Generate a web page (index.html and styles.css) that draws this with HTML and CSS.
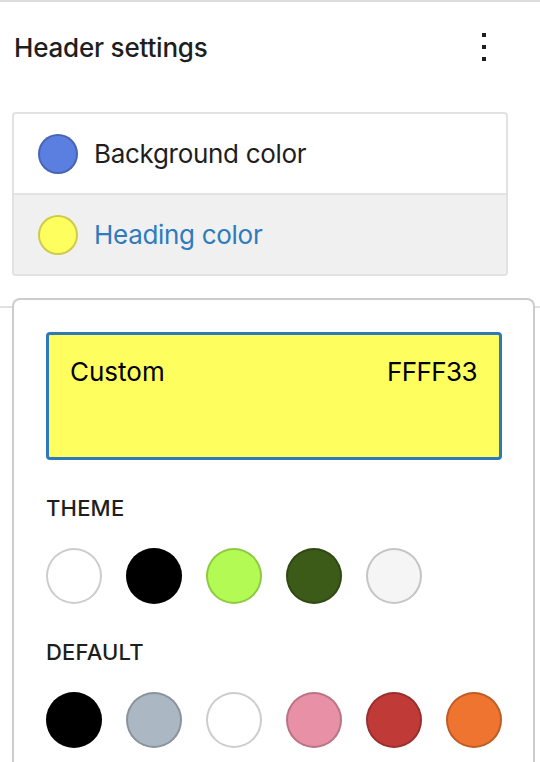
FILE: index.html
```html
<!DOCTYPE html>
<html lang="en">
<head>
<meta charset="utf-8">
<title>Header settings</title>
<link rel="stylesheet" href="styles.css">
</head>
<body>
<div class="sidebar">
  <div class="panel-header">
    <h2 class="panel-title">Header settings</h2>
    <button class="more-btn" aria-label="Options">
      <svg viewBox="0 0 24 24" width="48" height="48"><path d="M13 19h-2v-2h2v2zm0-6h-2v-2h2v2zm0-6h-2V5h2v2z" fill="#1e1e1e"/></svg>
    </button>
  </div>
  <div class="color-list">
    <div class="color-item">
      <span class="indicator ind-blue"></span>
      <span class="item-label">Background color</span>
    </div>
    <div class="color-item active">
      <span class="indicator ind-yellow"></span>
      <span class="item-label">Heading color</span>
    </div>
  </div>
  <div class="panel-divider"></div>

  <div class="popover">
    <div class="custom-swatch">
      <span>Custom</span>
      <span class="hex">FFFF33</span>
    </div>
    <div class="palette-label">Theme</div>
    <div class="swatches">
      <span class="swatch" style="background:#ffffff"></span>
      <span class="swatch" style="background:#000000"></span>
      <span class="swatch" style="background:#b3fa55"></span>
      <span class="swatch" style="background:#3c5a18"></span>
      <span class="swatch" style="background:#f5f5f5"></span>
    </div>
    <div class="palette-label">Default</div>
    <div class="swatches">
      <span class="swatch" style="background:#000000"></span>
      <span class="swatch" style="background:#abb8c3"></span>
      <span class="swatch" style="background:#ffffff"></span>
      <span class="swatch" style="background:#e891a6"></span>
      <span class="swatch" style="background:#c03a38"></span>
      <span class="swatch" style="background:#ee7430"></span>
    </div>
  </div>
</div>
</body>
</html>
```

FILE: styles.css
```css
html, body {
  margin: 0;
  padding: 0;
  background: #ffffff;
}
body {
  font-family: Inter, "Noto Sans", "Liberation Sans", sans-serif;
  color: #1e1e1e;
  overflow: hidden;
}
.sidebar {
  position: relative;
  width: 540px;
  height: 762px;
  border-top: 2px solid #dcdcdc;
  box-sizing: border-box;
  overflow: hidden;
}
.panel-header {
  display: flex;
  align-items: center;
  justify-content: space-between;
  height: 90px;
  padding: 0 32px 0 14px;
}
.panel-title {
  margin: 0;
  font-size: 26px;
  font-weight: 500;
  letter-spacing: -0.2px;
}
.more-btn {
  width: 48px;
  height: 48px;
  padding: 0;
  border: 0;
  background: none;
  display: flex;
}
.color-list {
  margin: 20px 32px 0 12px;
  border: 2px solid #e2e2e2;
  border-radius: 4px;
  overflow: hidden;
}
.color-item {
  display: flex;
  align-items: center;
  height: 79px;
  padding-left: 24px;
  gap: 16px;
  font-size: 26px;
}
.color-item + .color-item {
  border-top: 2px solid #e2e2e2;
}
.color-item.active {
  background: #f0f0f0;
  color: #2e7bbd;
}
.item-label {
  letter-spacing: -0.3px;
}
.indicator {
  width: 40px;
  height: 40px;
  border-radius: 50%;
  box-sizing: border-box;
  box-shadow: inset 0 0 0 2px rgba(0, 0, 0, 0.2);
}
.ind-blue { background: #5b7fe0; }
.ind-yellow { background: #fffe5f; }
.panel-divider {
  margin-top: 30px;
  border-top: 2px solid #e0e0e0;
}
.popover {
  position: absolute;
  top: 296px;
  left: 12px;
  bottom: 0;
  width: 523px;
  box-sizing: border-box;
  background: #ffffff;
  border: 2px solid #cccccc;
  border-bottom: 0;
  border-radius: 8px 8px 0 0;
  padding: 32px 31px 0 32px;
}
.custom-swatch {
  display: flex;
  justify-content: space-between;
  align-items: flex-start;
  height: 128px;
  box-sizing: border-box;
  padding: 21px 22px 0 21px;
  border: 3px solid #2f79b9;
  border-radius: 4px;
  background: #fffe5f;
  font-size: 26px;
  color: #000000;
}
.hex {
  letter-spacing: -0.6px;
}
.palette-label {
  margin-top: 35px;
  font-size: 22px;
  line-height: 26px;
  font-weight: 500;
  text-transform: uppercase;
  letter-spacing: 0.2px;
}
.swatches {
  display: flex;
  gap: 24px;
  margin-top: 27px;
}
.swatch {
  width: 56px;
  height: 56px;
  border-radius: 50%;
  box-shadow: inset 0 0 0 2px rgba(0, 0, 0, 0.2);
}
```
